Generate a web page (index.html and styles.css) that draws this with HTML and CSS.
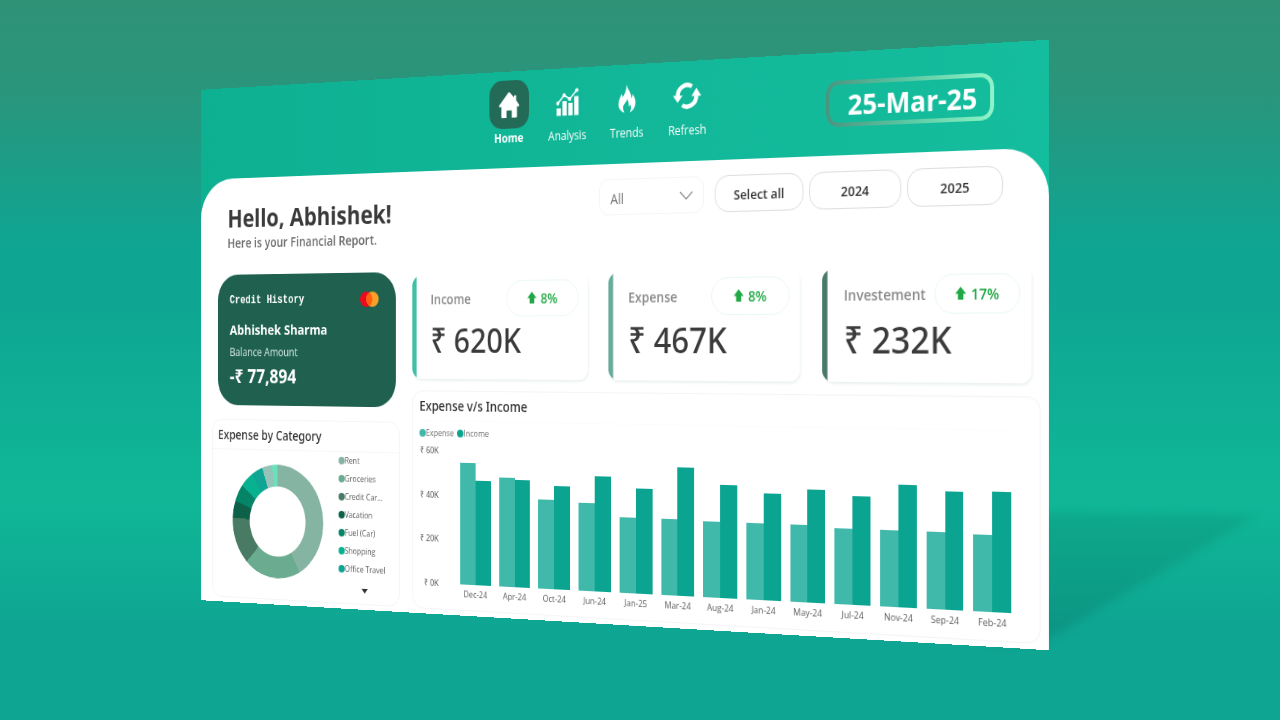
FILE: index.html
```html
<!DOCTYPE html>
<html lang="en">
<head>
<meta charset="utf-8">
<meta name="viewport" content="width=device-width, initial-scale=1">
<title>Financial Report</title>
<link rel="stylesheet" href="styles.css">
</head>
<body>
<div class="scene">
  <div class="stage">
    <div class="floor-shadow"></div>
    <div class="panel">
      <header class="topbar">
        <nav class="nav">
          <a class="nav-item active" href="#home">
            <span class="nav-icon"><svg width="26" height="28" viewBox="0 0 26 28" fill="#fff"><path d="M12 1.500.8 14.200q-.6 1.300.8 1.600H3.500V26q0 1 1 1h5.300v-6.500q0-1 1-1h4.400q1 0 1 1V27h5.300q1 0 1-1V15.800h1.900q1.400-.3.8-1.600L21.500 9.500V4.500h-2.500v2L14 1.500Q13 .5 12 1.500z"/></svg></span>
            <span class="nav-label">Home</span>
          </a>
          <a class="nav-item" href="#analysis">
            <span class="nav-icon"><svg width="28" height="28" viewBox="0 0 28 28" fill="#fff"><rect x="1" y="20" width="5" height="7.500"/><rect x="8" y="13" width="5" height="14.500"/><rect x="15" y="15" width="5" height="12.500"/><rect x="22" y="8.500" width="5" height="19"/><path d="M2.500 15 10 7l6.500 4L25 2.500" fill="none" stroke="#fff" stroke-width="1.600"/><circle cx="2.500" cy="15" r="1.900"/><circle cx="10" cy="7" r="1.900"/><circle cx="16.500" cy="11" r="1.900"/><circle cx="25" cy="2.500" r="1.900"/></svg></span>
            <span class="nav-label">Analysis</span>
          </a>
          <a class="nav-item" href="#trends">
            <span class="nav-icon"><svg width="21" height="29" viewBox="0 0 20 28" fill="#fff"><path d="M9.500.5c.8 4 3.700 6 4.800 10 .3 1.300.3 2.300.2 3.300 1-.8 1.600-2.200 1.600-4C18.700 13 20 16 19.500 19.500c-.6 4-3.300 6.700-6.500 8 1.700-2.500 1.800-5.200.6-7.600-.4 1-.8 1.600-1.600 2 .2-3.600-.6-5.400-1.700-7.600-.2 3.400-4.600 4.600-4.600 8.500 0 1.800.6 3.400 1.600 4.700C3 26.300.5 23.300.5 19.300.5 15.500 2.800 12.500 4 9.500c.8 1 1 2 1 3.300C8 9.500 9.600 5.500 9.500.5z"/></svg></span>
            <span class="nav-label">Trends</span>
          </a>
          <a class="nav-item" href="#refresh">
            <span class="nav-icon"><svg width="32" height="30" viewBox="0 0 32 30"><g fill="none" stroke="#fff" stroke-width="4.400"><path d="M5.500 15A10.500 10.500 0 0 1 21.500 6"/><path d="M26.500 15A10.500 10.500 0 0 1 10.500 24"/></g><path d="M0 14.500h11l-5.500 7zM21 15.500h11l-5.500-8z" fill="#fff"/></svg></span>
            <span class="nav-label">Refresh</span>
          </a>
        </nav>
        <time class="date" datetime="2025-03-25">25-Mar-25</time>
      </header>

      <main class="content">
        <div class="side">
          <section class="greeting">
            <h1>Hello, Abhishek!</h1>
            <p>Here is your Financial Report.</p>
          </section>

          <section class="credit">
            <div class="credit-head">
              <span>Credit History</span>
              <svg width="24" height="16" viewBox="0 0 24 16"><circle cx="8" cy="8" r="8" fill="#eb0a1e"/><circle cx="16" cy="8" r="8" fill="#f9a02b"/><path d="M12 1.100a8 8 0 0 1 0 13.800 8 8 0 0 1 0-13.800z" fill="#ff5f0f"/></svg>
            </div>
            <strong class="credit-name">Abhishek Sharma</strong>
            <span class="credit-label">Balance Amount</span>
            <strong class="credit-value">-₹ 77,894</strong>
          </section>

          <section class="card category">
            <h2>Expense by Category</h2>
            <div class="category-body">
              <div class="donut"></div>
              <div class="category-key">
                <ul>
                  <li><i class="dot rent"></i>Rent</li>
                  <li><i class="dot groceries"></i>Groceries</li>
                  <li><i class="dot credit-card"></i>Credit Car...</li>
                  <li><i class="dot vacation"></i>Vacation</li>
                  <li><i class="dot fuel"></i>Fuel (Car)</li>
                  <li><i class="dot shopping"></i>Shopping</li>
                  <li><i class="dot office"></i>Office Travel</li>
                </ul>
                <button class="more" type="button" aria-label="More categories"></button>
              </div>
            </div>
          </section>
        </div>

        <div class="main">
          <div class="filters">
            <div class="select-wrap">
              <select class="select" aria-label="Month"><option>All</option></select>
              <svg class="chevron" width="16" height="10" viewBox="0 0 16 10"><path d="M1 1l7 7 7-7" fill="none" stroke="#8a8a8a" stroke-width="1.200"/></svg>
            </div>
            <div class="years">
              <button type="button">Select all</button>
              <button type="button">2024</button>
              <button type="button">2025</button>
            </div>
          </div>

          <div class="kpis">
            <section class="kpi income">
              <div class="kpi-head"><h3>Income</h3><span class="badge"><svg width="11" height="13" viewBox="0 0 12 14"><path d="M6 0l6 7H9v6H3V7H0z" fill="#1fa844"/></svg>8%</span></div>
              <p>₹ 620K</p>
            </section>
            <section class="kpi expense">
              <div class="kpi-head"><h3>Expense</h3><span class="badge"><svg width="11" height="13" viewBox="0 0 12 14"><path d="M6 0l6 7H9v6H3V7H0z" fill="#1fa844"/></svg>8%</span></div>
              <p>₹ 467K</p>
            </section>
            <section class="kpi invest">
              <div class="kpi-head"><h3>Investement</h3><span class="badge"><svg width="11" height="13" viewBox="0 0 12 14"><path d="M6 0l6 7H9v6H3V7H0z" fill="#1fa844"/></svg>17%</span></div>
              <p>₹ 232K</p>
            </section>
          </div>

          <section class="card chart">
            <h2>Expense v/s Income</h2>
            <div class="chart-key"><span><i class="dot exp"></i>Expense</span><span><i class="dot inc"></i>Income</span></div>
            <div class="plot">
              <div class="axis"><span>₹ 60K</span><span>₹ 40K</span><span>₹ 20K</span><span>₹ 0K</span></div>
              <div class="groups">
                <div class="group"><div class="bars"><b style="height:91%"></b><b style="height:78%"></b></div><span>Dec-24</span></div>
                <div class="group"><div class="bars"><b style="height:81%"></b><b style="height:79.500%"></b></div><span>Apr-24</span></div>
                <div class="group"><div class="bars"><b style="height:65.700%"></b><b style="height:75.700%"></b></div><span>Oct-24</span></div>
                <div class="group"><div class="bars"><b style="height:64%"></b><b style="height:84.300%"></b></div><span>Jun-24</span></div>
                <div class="group"><div class="bars"><b style="height:54.500%"></b><b style="height:75.700%"></b></div><span>Jan-25</span></div>
                <div class="group"><div class="bars"><b style="height:54.400%"></b><b style="height:92.300%"></b></div><span>Mar-24</span></div>
                <div class="group"><div class="bars"><b style="height:54.300%"></b><b style="height:80%"></b></div><span>Aug-24</span></div>
                <div class="group"><div class="bars"><b style="height:54%"></b><b style="height:75.500%"></b></div><span>Jan-24</span></div>
                <div class="group"><div class="bars"><b style="height:53.700%"></b><b style="height:78.800%"></b></div><span>May-24</span></div>
                <div class="group"><div class="bars"><b style="height:52.900%"></b><b style="height:75.400%"></b></div><span>Jul-24</span></div>
                <div class="group"><div class="bars"><b style="height:52.600%"></b><b style="height:84.300%"></b></div><span>Nov-24</span></div>
                <div class="group"><div class="bars"><b style="height:52.400%"></b><b style="height:80%"></b></div><span>Sep-24</span></div>
                <div class="group"><div class="bars"><b style="height:52%"></b><b style="height:81.300%"></b></div><span>Feb-24</span></div>
              </div>
            </div>
          </section>
        </div>
      </main>
    </div>
  </div>
</div>
</body>
</html>
```
FILE: styles.css
```css
* { box-sizing: border-box; }

body, h1, h2, h3, p, ul { margin: 0; padding: 0; }

body {
  font-family: "Open Sans", "Noto Sans", sans-serif;
  color: #3b3b3b;
}

button, select { font: inherit; color: inherit; }

.scene {
  min-height: 100vh;
  display: flex;
  align-items: center;
  justify-content: center;
  padding: 0 105px 30px 0;
  overflow: hidden;
  background: linear-gradient(#2f9277 0%, #2a957b 12%, #0ea592 34%, #0ea592 40%, #10b797 69%, #0ea592 88%, #0ea592 100%);
}

/* The panel is turned away from the viewer on its left side. */
.stage {
  position: relative;
  width: 77.2vw;
  perspective: 2900px;
}

.panel {
  position: relative;
  display: flex;
  flex-direction: column;
  background: linear-gradient(90deg, #0eb092, #14bd9d);
  transform: rotateY(-31.6deg);
}

.floor-shadow {
  position: absolute;
  left: 91%;
  top: 79%;
  width: 280px;
  height: 140px;
  filter: blur(4px);
}

.floor-shadow::before {
  content: "";
  display: block;
  height: 100%;
  background: linear-gradient(rgba(8, 120, 95, .18), rgba(8, 115, 100, .32));
  clip-path: polygon(0 4%, 94% 7%, 20% 95%, 0 100%);
}

.topbar {
  display: flex;
  justify-content: space-between;
  align-items: flex-start;
  height: 98px;
  padding: 9px 54px 0 37%;
}

.nav { display: grid; grid-template-columns: 70px 70px 69px 69px; }

.nav-item {
  display: flex;
  flex-direction: column;
  align-items: center;
  color: #fff;
  text-decoration: none;
  font-size: 12px;
  line-height: 20px;
}

.nav-icon {
  display: grid;
  place-items: center;
  width: 48px;
  height: 49px;
  border-radius: 15px;
}

.active .nav-icon { background: #246b57; }
.active .nav-label { font-weight: 700; }

.date {
  position: relative;
  margin-top: 18px;
  padding-left: 6px;
  width: 173px;
  height: 44px;
  border-radius: 13px;
  color: #fff;
  font-size: 27px;
  font-weight: 700;
  line-height: 46px;
  text-align: center;
}

/* Gradient ring with a see-through middle. */
.date::before {
  content: "";
  position: absolute;
  inset: 0;
  padding: 4px;
  border-radius: inherit;
  background: linear-gradient(90deg, #4b9480, #58c3a0 45%, #8df5c8);
  mask: linear-gradient(#000 0 0) content-box exclude, linear-gradient(#000 0 0);
}

.content {
  display: grid;
  grid-template-columns: 249px 1fr;
  gap: 16px;
  padding: 0 8px 5px 16px;
  background: #fff;
  border-radius: 44px 44px 0 0;
}

.side, .main { display: flex; flex-direction: column; min-width: 0; }

.greeting { min-height: 104px; padding: 24px 0 0 21px; white-space: nowrap; }
.greeting h1 { font-size: 27px; font-weight: 700; line-height: 37px; }
.greeting p { font-size: 14px; font-weight: 600; line-height: 18px; color: #6c6c6c; }

.credit {
  display: flex;
  flex-direction: column;
  margin: 0 5px 0 8px;
  height: 141px;
  padding: 18px 22px 0 16px;
  border-radius: 27px;
  background: #1f614e;
  color: #fff;
}

.credit-head {
  display: flex;
  justify-content: space-between;
  align-items: center;
  height: 20px;
  font: 700 12px "Liberation Mono", monospace;
}

.credit-name { margin-top: 9px; font-size: 15px; line-height: 24px; }
.credit-label { margin-top: 3px; font-size: 12px; line-height: 20px; color: #d9e8e3; }
.credit-value { margin-top: 1px; font-size: 21px; line-height: 28px; }

.card {
  border: 1px solid #f4f4f4;
  border-radius: 13px;
  background: #fff;
}

.card h2 {
  font: 500 14px/30px "Noto Sans", sans-serif;
  color: #2f2f2f;
}

.category { margin-top: 15px; height: 193px; }
.category h2 { padding: 1px 7px 0; border-bottom: 1px solid #f7f7f7; }
.category-body { display: flex; padding-left: 27px; }

.donut {
  width: 122px;
  height: 122px;
  margin-top: 15px;
  border-radius: 50%;
  background: conic-gradient(#86b4a2 0 151deg, #6bab90 0 223deg, #497a63 0 272deg, #0c6148 0 290deg, #068468 0 308deg, #08b18f 0 325deg, #0fa493 0 340deg, #95c3ba 0 353deg, #6be0bd 0);
  mask: radial-gradient(circle, transparent 37px, #000 38px);
}

.category-key { margin: -1px 0 0 20px; }
.category-key ul { list-style: none; }
.category-key li { display: flex; align-items: center; font-size: 9px; line-height: 19px; color: #5c5c5c; white-space: nowrap; }

.dot { flex: none; width: 8px; height: 8px; border-radius: 50%; }
.rent { background: #86b4a2; }
.groceries { background: #6bab90; }
.credit-card { background: #497a63; }
.vacation { background: #0c6148; }
.fuel { background: #068468; }
.shopping { background: #08b18f; }
.office { background: #0fa493; }
.exp { background: #40b9ab; }
.inc { background: #0ba490; }

.more {
  display: block;
  margin: 11px 0 0 30px;
  padding: 0;
  border: 4px solid transparent;
  border-top: 5px solid #333;
  border-bottom: 0;
  background: none;
}

.filters {
  display: flex;
  justify-content: flex-end;
  gap: 12px;
  margin: 15px 37px 57px 0;
}

.select-wrap { position: relative; width: 120px; }

.select {
  width: 100%;
  height: 36px;
  padding: 3px 12px 0;
  border: 1px solid #f5f5f5;
  border-radius: 11px;
  background: #fff;
  color: #767676;
  font-size: 14px;
  appearance: none;
}

.chevron { position: absolute; right: 12px; top: 14px; pointer-events: none; }

.years { display: flex; gap: 6px; }

.years button {
  width: 97px;
  height: 36px;
  padding: 2px 0 0;
  border: 1px solid #dedede;
  border-radius: 15px;
  background: #fff;
  font-size: 13px;
  font-weight: 600;
  color: #333;
}

.kpis {
  display: grid;
  grid-template-columns: repeat(3, 1fr);
  gap: 24px;
  margin: 0 9px 0 0;
}

.kpi {
  --accent: #3fbfa6;
  height: 107px;
  padding: 6px 11px 0 23px;
  border-radius: 11px;
  background: linear-gradient(90deg, var(--accent) 5px, #fff 6px);
  box-shadow: 1px 2px 3px #eaf2f0;
}

.expense { --accent: #68ab9c; }
.invest { --accent: #497a69; }

.kpi-head { display: flex; justify-content: space-between; align-items: center; }
.kpi h3 { font-size: 14px; font-weight: 600; color: #8a8a8a; }

.badge {
  display: flex;
  align-items: center;
  justify-content: center;
  gap: 5px;
  width: 86px;
  height: 37px;
  border: 1px solid #e9f9f4;
  border-radius: 19px;
  font-size: 14px;
  font-weight: 600;
  color: #1fa844;
}

.kpi p { margin-top: 2px; font: 500 35px/44px "Noto Sans", sans-serif; white-space: nowrap; }

.chart { margin-top: 12px; height: 226px; padding: 0 28px 0 8px; }
.chart h2 { border-bottom: 1px solid #fcfcfc; }

.chart-key { display: flex; gap: 4px; margin-top: 2px; font-size: 9px; line-height: 20px; color: #6e6e6e; }
.chart-key span { display: flex; align-items: center; }

.plot { display: flex; gap: 27px; margin-top: 8px; }

.axis {
  display: flex;
  flex-direction: column;
  justify-content: space-between;
  flex: none;
  width: 24px;
  height: 149px;
  margin-top: -6px;
  font: 9px/12px "Noto Sans", sans-serif;
  text-align: right;
  white-space: nowrap;
  color: #555;
}

.groups { flex: 1; display: grid; grid-template-columns: repeat(13, 1fr); gap: 10px; }
.group { min-width: 0; font-size: 9px; line-height: 20px; text-align: center; color: #5c5c5c; }
.group span { display: block; white-space: nowrap; }
.bars { display: flex; align-items: flex-end; height: 137px; }
.bars b { flex: 1; background: #40b9ab; }
.bars b + b { background: #0ba490; }
```
